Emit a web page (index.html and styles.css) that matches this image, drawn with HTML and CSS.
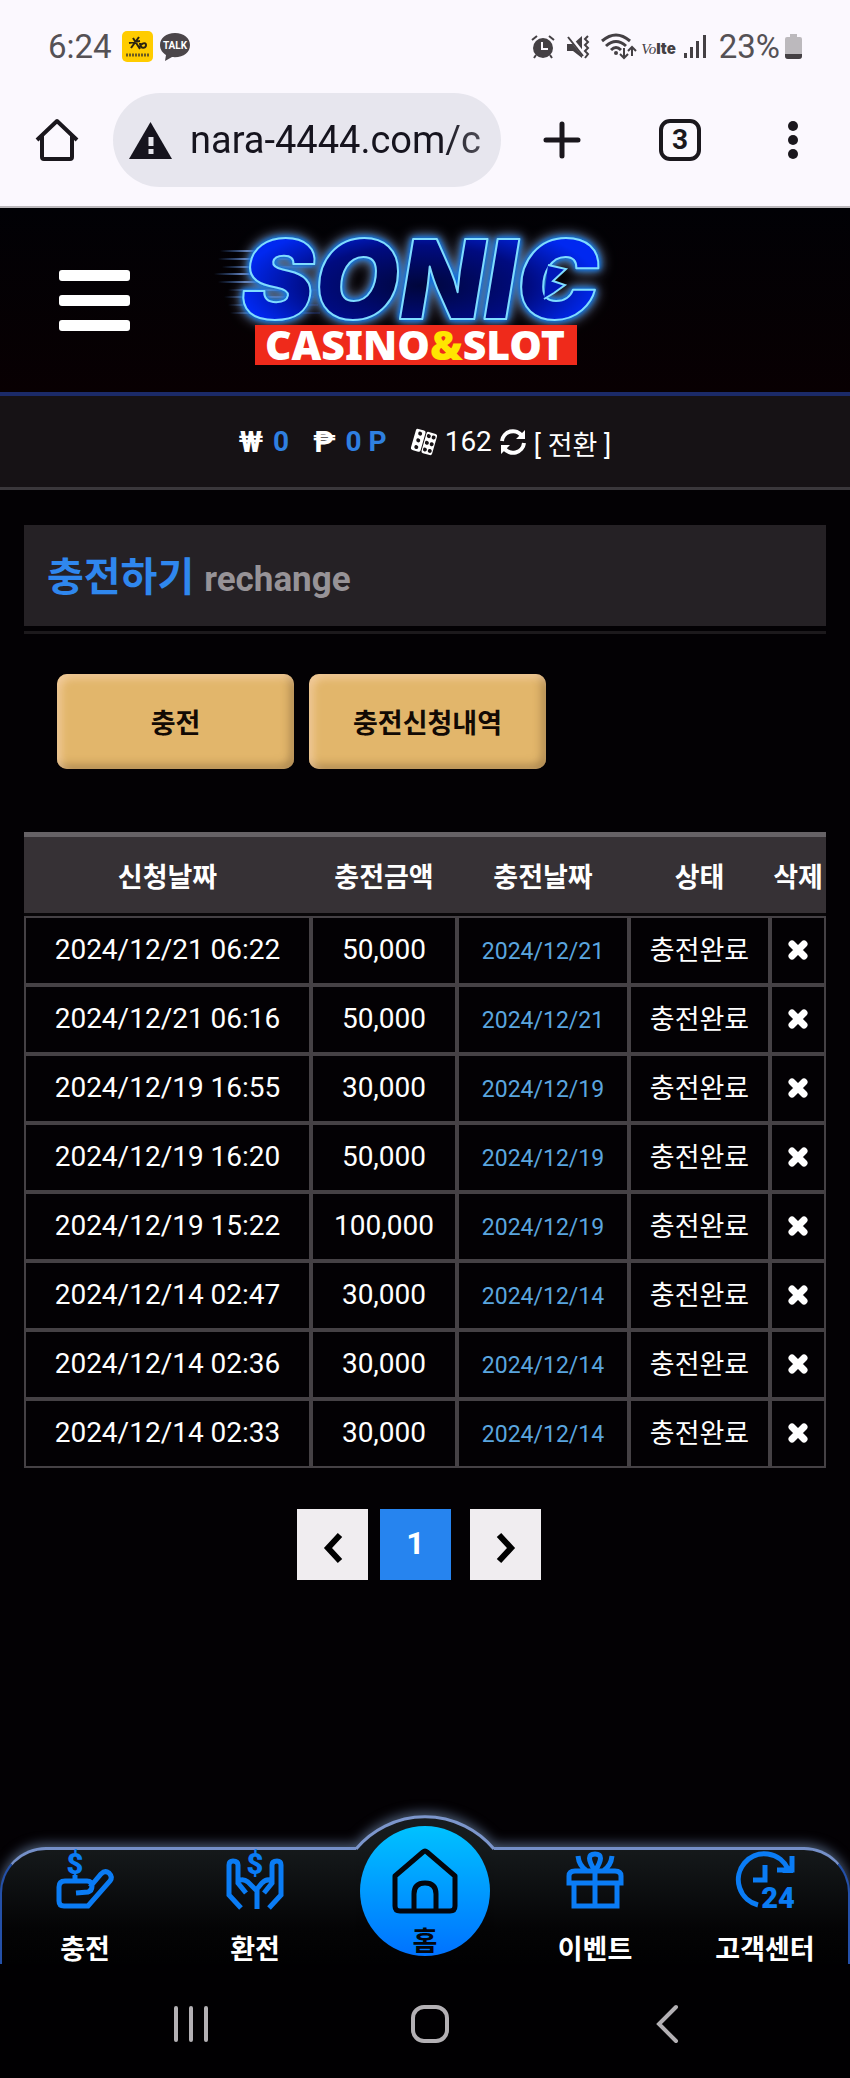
FILE: index.html
```html
<!DOCTYPE html>
<html lang="ko">
<head>
    <title>충전하기</title>
    <meta charset="utf-8">
    <meta name="viewport" content="width=device-width, initial-scale=1.0">
    <link rel="stylesheet" href="styles.css">
</head>

<body>
    <!-- shared icons -->
    <svg class="sprite" aria-hidden="true">
        <symbol id="icon-times" viewBox="0 0 20 20">
            <path d="M4 4L16 16M16 4L4 16" fill="none" stroke="currentColor" stroke-width="7" stroke-linecap="round"/>
        </symbol>
    </svg>

    <!-- phone status bar -->
    <div class="status-bar">
        <span class="status-time">6:24</span>
        <svg class="app-kb" width="31" height="31" viewBox="0 0 31 31">
            <rect width="31" height="31" rx="5" fill="#fc0"/>
            <path d="M7 12L18 10M9 17L17 6M11 7L18 18M18 12C18 18 24 18 24 14C24 11 19 12 18 16" fill="none" stroke="#2b2410" stroke-width="2"/>
            <path d="M4 24H27" stroke="#6b5a20" stroke-width="3" stroke-dasharray="2 1"/>
        </svg>
        <svg class="app-talk" width="30" height="28" viewBox="0 0 30 28">
            <path d="M15 0C6 0 0 5 0 12C0 17 3 20 6 22L5 28L12 24C23 25 30 20 30 12C30 5 24 0 15 0Z" fill="#4b464a"/>
            <text x="15" y="16" text-anchor="middle" class="talk-text">TALK</text>
        </svg>
        <div class="status-right">
            <svg width="24" height="24" viewBox="0 0 24 24" fill="none" stroke="#444044" stroke-width="3">
                <circle cx="12" cy="13" r="10" fill="#444044" stroke="none"/>
                <path d="M1 5L6 1M23 5L18 1M5 20L3 23M19 20L21 23" stroke-width="2"/>
                <path d="M11 7V14H17" stroke="#fbf8fe" stroke-width="2"/>
            </svg>
            <svg class="ic-mute" width="24" height="24" viewBox="0 0 24 24">
                <path d="M1 9H7L16 1V23L7 16H1Z" fill="#444044"/>
                <path d="M2 0L18 20" stroke="#fbf8fe" stroke-width="4"/>
                <path d="M2 2L17 21" stroke="#444044" stroke-width="2"/>
                <path d="M22 1L19 4L22 7L19 10L22 13L19 16L22 19L19 23" fill="none" stroke="#444044" stroke-width="2"/>
            </svg>
            <svg class="ic-wifi" width="35" height="27" viewBox="0 0 35 27" fill="none" stroke="#444044">
                <path d="M1 8Q15 -4 29 8M5 13Q15 4 25 13M10 17Q15 12 20 17" stroke-width="3"/>
                <circle cx="15" cy="20" r="2" fill="#444044" stroke="none"/>
                <path d="M23 15V25M19 21L23 25L27 21M31 23V14M27 18L31 14L35 18" stroke-width="2"/>
            </svg>
            <span class="volte"><i>Vo</i><b>lte</b></span>
            <svg class="ic-signal" width="22" height="23" viewBox="0 0 22 23" fill="#444044">
                <rect y="18" width="3" height="5"/><rect x="6" y="12" width="3" height="11"/>
                <rect x="12" y="6" width="3" height="17"/><rect x="19" width="3" height="23"/>
            </svg>
            <span class="battery-text">23%</span>
            <svg width="17" height="25" viewBox="0 0 17 25">
                <path d="M5 0H12V3H15Q17 3 17 5V22Q17 25 14 25H3Q0 25 0 22V5Q0 3 2 3H5Z" fill="#bcb9bd"/>
                <path d="M0 20H17V22Q17 25 14 25H3Q0 25 0 22Z" fill="#444044"/>
            </svg>
        </div>
    </div>

    <!-- browser toolbar -->
    <div class="browser-bar">
        <button class="tool" aria-label="홈페이지">
            <svg width="44" height="44" viewBox="0 0 44 44" fill="none" stroke="#1a171d" stroke-width="4">
                <path d="M2 22L22 3L42 22M7 18V39Q7 41 9 41H35Q37 41 37 39V18" stroke-linejoin="round"/>
            </svg>
        </button>
        <label class="url-box">
            <svg width="43" height="37" viewBox="0 0 43 37">
                <path d="M21.500 0L43 37H0Z" fill="#16141e"/>
                <path d="M22 15V24M22 27V32" stroke="#e7e6ee" stroke-width="5"/>
            </svg>
            <input type="text" class="url-input" value="nara-4444.com/c" aria-label="주소">
        </label>
        <button class="tool tool-plus" aria-label="새 탭">
            <svg width="38" height="38" viewBox="0 0 38 38" stroke="#1a171d" stroke-width="5" stroke-linecap="round"><path d="M19 3V35M3 19H35"/></svg>
        </button>
        <button class="tool tool-tabs">3</button>
        <button class="tool tool-more" aria-label="메뉴">
            <svg width="10" height="38" viewBox="0 0 10 38" fill="#1a171d"><circle cx="5" cy="5" r="5"/><circle cx="5" cy="19" r="5"/><circle cx="5" cy="33" r="5"/></svg>
        </button>
    </div>

    <header class="header">
        <button class="menu-button" aria-label="전체 메뉴"><span></span><span></span><span></span></button>
        <a href="#" class="logo">
            <svg width="410" height="150" viewBox="0 0 410 150">
                <defs>
                    <radialGradient id="logoFill" cx="50%" cy="55%" r="50%">
                        <stop offset="0" stop-color="#00063c"/>
                        <stop offset="0.6" stop-color="#000b80"/>
                        <stop offset="1" stop-color="#0028f0"/>
                    </radialGradient>
                    <linearGradient id="speed">
                        <stop offset="0" stop-color="#3a68b0" stop-opacity="0"/>
                        <stop offset="0.300" stop-color="#5a78b0"/>
                        <stop offset="1" stop-color="#1840c0" stop-opacity="0.200"/>
                    </linearGradient>
                </defs>
                <g fill="url(#speed)">
                    <rect x="12" y="25" width="90" height="2"/><rect x="10" y="33" width="90" height="2"/>
                    <rect x="14" y="41" width="90" height="2"/><rect x="6" y="48" width="90" height="2"/>
                    <rect x="10" y="56" width="90" height="2"/><rect x="20" y="64" width="90" height="2"/>
                    <rect x="16" y="71" width="90" height="2"/><rect x="20" y="79" width="90" height="2"/>
                    <rect x="22" y="87" width="90" height="2"/>
                </g>
                <text x="33" y="94" class="logo-sonic" fill="url(#logoFill)" stroke="#7fdcff" stroke-width="2">SONIC</text>
                <!-- quills -->
                <path d="M340 40L358 44L345 56L357 60L346 68L336 74" fill="#0018b8" stroke="#7fdcff" stroke-width="2"/>
                <rect x="47" y="100" width="322" height="40" fill="#ef2a1b"/>
                <text x="207" y="135" text-anchor="middle" class="logo-sub">CASINO<tspan fill="#ffe600">&amp;</tspan>SLOT</text>
            </svg>
        </a>
    </header>

    <div class="info-bar">
        <b class="coin">₩</b><b class="amount">0</b>
        <b class="coin coin-point">₱</b><b class="amount">0 P</b>
        <svg class="ic-dice" width="26" height="26" viewBox="0 0 26 26">
            <g transform="rotate(16 13 13)">
                <rect x="2" y="2" width="10" height="22" rx="2" fill="#fff"/><rect x="13" y="2" width="11" height="22" rx="2" fill="#fff"/>
                <g fill="#161215"><circle cx="7" cy="6" r="2"/><circle cx="7" cy="13" r="2"/><circle cx="7" cy="20" r="2"/>
                <circle cx="16" cy="6" r="2"/><circle cx="21" cy="6" r="2"/><circle cx="16" cy="13" r="2"/><circle cx="21" cy="13" r="2"/><circle cx="16" cy="20" r="2"/><circle cx="21" cy="20" r="2"/></g>
            </g>
        </svg>
        <span class="count">162</span>
        <svg class="ic-sync" width="26" height="26" viewBox="0 0 26 26" fill="none" stroke="#fff" stroke-width="4">
            <path d="M2 12A11 11 0 0 1 22 7M24 14A11 11 0 0 1 4 19"/>
            <path d="M25 1V10H16ZM1 25V16H10Z" fill="#fff" stroke="none"/>
        </svg>
        <a href="#" class="convert">[ 전환 ]</a>
    </div>

    <main class="content">
        <div class="title-wrap">
            <h1 class="title">충전하기 <small>rechange</small></h1>
        </div>

        <div class="buttons">
            <button class="gold-button">충전</button>
            <button class="gold-button">충전신청내역</button>
        </div>

        <table class="history">
            <colgroup><col class="c-apply"><col class="c-amount"><col class="c-date"><col class="c-state"><col class="c-del"></colgroup>
            <thead>
                <tr><th>신청날짜</th><th>충전금액</th><th>충전날짜</th><th>상태</th><th>삭제</th></tr>
            </thead>
            <tbody>
                <tr><td>2024/12/21 06:22</td><td>50,000</td><td class="date">2024/12/21</td><td class="state">충전완료</td><td><button class="delete" aria-label="삭제"><svg><use href="#icon-times"/></svg></button></td></tr>
                <tr><td>2024/12/21 06:16</td><td>50,000</td><td class="date">2024/12/21</td><td class="state">충전완료</td><td><button class="delete" aria-label="삭제"><svg><use href="#icon-times"/></svg></button></td></tr>
                <tr><td>2024/12/19 16:55</td><td>30,000</td><td class="date">2024/12/19</td><td class="state">충전완료</td><td><button class="delete" aria-label="삭제"><svg><use href="#icon-times"/></svg></button></td></tr>
                <tr><td>2024/12/19 16:20</td><td>50,000</td><td class="date">2024/12/19</td><td class="state">충전완료</td><td><button class="delete" aria-label="삭제"><svg><use href="#icon-times"/></svg></button></td></tr>
                <tr><td>2024/12/19 15:22</td><td>100,000</td><td class="date">2024/12/19</td><td class="state">충전완료</td><td><button class="delete" aria-label="삭제"><svg><use href="#icon-times"/></svg></button></td></tr>
                <tr><td>2024/12/14 02:47</td><td>30,000</td><td class="date">2024/12/14</td><td class="state">충전완료</td><td><button class="delete" aria-label="삭제"><svg><use href="#icon-times"/></svg></button></td></tr>
                <tr><td>2024/12/14 02:36</td><td>30,000</td><td class="date">2024/12/14</td><td class="state">충전완료</td><td><button class="delete" aria-label="삭제"><svg><use href="#icon-times"/></svg></button></td></tr>
                <tr><td>2024/12/14 02:33</td><td>30,000</td><td class="date">2024/12/14</td><td class="state">충전완료</td><td><button class="delete" aria-label="삭제"><svg><use href="#icon-times"/></svg></button></td></tr>
            </tbody>
        </table>

        <nav class="pagination" aria-label="페이지">
            <a href="#" class="page" aria-label="이전"><svg width="20" height="32" viewBox="0 0 20 32"><path d="M17 3L5 16L17 29" fill="none" stroke="#000" stroke-width="6"/></svg></a>
            <a href="#" class="page active">1</a>
            <a href="#" class="page" aria-label="다음"><svg width="20" height="32" viewBox="0 0 20 32"><path d="M3 3L15 16L3 29" fill="none" stroke="#000" stroke-width="6"/></svg></a>
        </nav>
    </main>

    <!-- bottom menu -->
    <nav class="bottom-nav">
        <div class="nav-shape">
            <div class="nav-left"></div>
            <svg class="nav-bump" width="138" height="148" viewBox="0 0 138 148">
                <defs><linearGradient id="bump" x2="0" y2="1">
                    <stop offset="0" stop-color="#171c1f"/><stop offset="0.220" stop-color="#15191b"/><stop offset="0.750" stop-color="#040405"/><stop offset="1" stop-color="#010102"/>
                </linearGradient></defs>
                <path d="M0 33A90 90 0 0 1 138 33V148H0Z" fill="url(#bump)"/>
                <path d="M0 33A90 90 0 0 1 138 33" fill="none" stroke="#7c96cc" stroke-width="3"/>
            </svg>
            <div class="nav-right"></div>
        </div>
        <a href="#" class="nav-item">
            <svg width="58" height="58" viewBox="0 0 58 58" fill="none" stroke="#0a7cf5" stroke-width="5">
                <text x="19" y="23" text-anchor="middle" class="icon-text">$</text>
                <path d="M19 24V30M20 42L32 41Q36 40 36 35Q36 30 31 30H9Q3 30 3 36V50Q3 55 8 55H32L54 30Q57 26 53 22Q49 19 45 23L34 36"/>
            </svg>
            <span>충전</span>
        </a>
        <a href="#" class="nav-item">
            <svg width="58" height="58" viewBox="0 0 58 58" fill="none" stroke="#0a7cf5" stroke-width="5">
                <text x="29" y="23" text-anchor="middle" class="icon-text">$</text>
                <path d="M15 57L3 44V14Q3 10 7 10Q12 10 12 14V32L20 42M12 30Q17 27 22 31L31 40V58M43 57L55 44V14Q55 10 51 10Q46 10 46 14V32L38 42M46 30Q41 27 36 32L31 38"/>
            </svg>
            <span>환전</span>
        </a>
        <a href="#" class="nav-item">
            <div class="home-circle">
                <svg width="66" height="66" viewBox="0 0 66 66" fill="none" stroke="#03060c" stroke-width="5" stroke-linejoin="round">
                    <path d="M3 28L31 4Q33 2 35 4L63 28V58Q63 63 58 63H8Q3 63 3 58ZM22 63V46Q22 35 33 35Q44 35 44 46V63"/>
                </svg>
                <span>홈</span>
            </div>
        </a>
        <a href="#" class="nav-item">
            <svg width="58" height="58" viewBox="0 0 58 58" fill="none" stroke="#0a7cf5" stroke-width="5">
                <path d="M8 34V55H51V34M3 32H55V25Q55 20 49 20H9Q3 20 3 25ZM29 18V55M12 5Q13 15 21 20M46 5Q45 15 37 20"/>
                <path d="M29 20Q18 3 29 3Q40 3 29 20"/>
            </svg>
            <span>이벤트</span>
        </a>
        <a href="#" class="nav-item">
            <svg width="58" height="58" viewBox="0 0 58 58" fill="none" stroke="#0a7cf5" stroke-width="5">
                <path d="M22 54A26 26 0 1 1 52 18M56 5V19H41M29 14V29H17"/>
                <path d="M57 12V22H46Z" fill="#0a7cf5" stroke="none"/>
                <text x="42" y="57" text-anchor="middle" class="icon-text">24</text>
            </svg>
            <span>고객센터</span>
        </a>
    </nav>

    <!-- android buttons -->
    <div class="system-bar">
        <button aria-label="최근 앱"><svg width="36" height="38" viewBox="0 0 36 38"><path d="M3 3V35M18 3V35M33 3V35"/></svg></button>
        <button aria-label="홈"><svg width="38" height="38" viewBox="0 0 38 38"><rect x="2" y="2" width="34" height="34" rx="11"/></svg></button>
        <button aria-label="뒤로"><svg width="28" height="38" viewBox="0 0 28 38"><path d="M26 2L9 19L26 36"/></svg></button>
    </div>
</body>
</html>
```
FILE: styles.css
```css
* {
    box-sizing: border-box;
}
body {
    margin: 0;
    min-height: 100vh;
    display: flex;
    flex-direction: column;
    background-color: #030104;
    color: #fff;
    font-family: Roboto, "Noto Sans CJK KR", sans-serif;
    font-size: 28px;
}
a {
    color: inherit;
    text-decoration: none;
}
button {
    padding: 0;
    border: none;
    background: none;
    color: inherit;
    font-family: inherit;
    cursor: pointer;
}
svg {
    display: block;
    flex: none;
    overflow: visible;
}
.sprite {
    position: absolute;
    width: 0;
    height: 0;
}

/* phone status bar */
.status-bar {
    display: flex;
    align-items: center;
    height: 93px;
    padding: 0 48px;
    background: #fbf8fe;
    color: #555155;
    font-size: 33px;
}
.status-time {
    width: 74px;
}
.app-talk {
    margin-left: 7px;
}
.talk-text {
    font: bold 10px Roboto, sans-serif;
    fill: #fff;
}
.status-right {
    display: flex;
    align-items: center;
    margin-left: auto;
}
.ic-mute,
.ic-wifi {
    margin-left: 11px;
}
.volte {
    display: flex;
    align-items: baseline;
    margin: 4px 8px 0 5px;
    color: #444044;
    font-size: 15px;
}
.volte i {
    font-family: "Liberation Serif", serif;
}
.volte b {
    font-family: Inter, sans-serif;
    font-weight: 900;
}
.battery-text {
    margin: 0 5px 0 13px;
}

/* browser toolbar */
.browser-bar {
    display: flex;
    align-items: flex-start;
    height: 115px;
    padding: 0 52px 0 35px;
    background: #fbf8fe;
    border-bottom: 2px solid #bbb8bc;
}
.tool {
    height: 94px;
    color: #1a171d;
}
.url-box {
    flex: 1;
    display: flex;
    align-items: center;
    min-width: 0;
    height: 94px;
    margin-left: 34px;
    padding: 0 16px;
    border-radius: 47px;
    background: #e7e6ee;
}
.url-input {
    flex: 1;
    min-width: 0;
    margin-left: 18px;
    padding: 0;
    border: none;
    outline: none;
    background: none;
    color: #16141e;
    font: 38px Roboto, sans-serif;
    -webkit-mask-image: linear-gradient(to right, #000 85%, rgba(0, 0, 0, 0.7));
    mask-image: linear-gradient(to right, #000 85%, rgba(0, 0, 0, 0.7));
}
.tool-plus {
    margin-left: 42px;
}
.tool-tabs {
    width: 42px;
    height: 42px;
    margin: 26px 0 0 78px;
    border: 4px solid #1a171d;
    border-radius: 11px;
    font-size: 28px;
    font-weight: bold;
    line-height: 34px;
}
.tool-more {
    margin-left: 87px;
}

/* header */
.header {
    display: flex;
    align-items: center;
    height: 188px;
    border-bottom: 4px solid #1b2a68;
    background: linear-gradient(#010105, #080002);
}
.menu-button {
    display: flex;
    flex-direction: column;
    gap: 14px;
    width: 71px;
    margin-left: 59px;
}
.menu-button span {
    height: 11px;
    border-radius: 3px;
    background: #fff;
}
.logo {
    margin-left: 78px;
}
.logo-sonic {
    font: italic 900 110px Inter, sans-serif;
    stroke-linejoin: round;
    filter: drop-shadow(0 0 2px #0a6fe0) drop-shadow(0 0 3px #0a6fe0) drop-shadow(0 0 6px rgba(157, 180, 216, 0.8));
}
.logo-sub {
    font: 900 41px "Noto Sans", sans-serif;
    fill: #fff;
}

.info-bar {
    display: flex;
    justify-content: center;
    align-items: center;
    height: 94px;
    border-bottom: 3px solid #3a373b;
    background: #161215;
}
.coin {
    font-size: 30px;
}
.amount {
    margin-left: 10px;
    color: #2f80e0;
}
.coin-point,
.ic-dice {
    margin-left: 24px;
}
.count {
    margin: 0 8px;
}
.convert {
    margin-left: 8px;
    padding-top: 4px;
    font-size: 27px;
}

/* content */
.content {
    flex: 1;
    padding: 35px 24px;
}
.title-wrap {
    padding-bottom: 5px;
    border-bottom: 3px solid #1c191c;
}
.title {
    height: 101px;
    margin: 0;
    padding-left: 23px;
    background: #252125;
    color: #2f87ee;
    font-size: 40px;
    line-height: 106px;
}
.title small {
    color: #979397;
    font-size: 35px;
}
.buttons {
    display: flex;
    gap: 15px;
    margin: 40px 0 63px 33px;
}
.gold-button {
    width: 237px;
    height: 95px;
    border-radius: 10px;
    background: #e2b66b;
    box-shadow: inset 4px 4px 8px rgba(255, 220, 190, 0.6), inset -4px -4px 8px rgba(120, 90, 50, 0.5);
    color: #120a04;
    font-size: 27px;
    font-weight: bold;
}
.history {
    width: 100%;
    table-layout: fixed;
    border-collapse: separate;
    border-spacing: 0;
    text-align: center;
}
.c-apply { width: 287px; }
.c-amount { width: 146px; }
.c-date { width: 172px; }
.c-state { width: 141px; }
.c-del { width: 56px; }
.history th {
    height: 84px;
    padding: 0;
    border-top: 5px solid #666266;
    border-bottom: 3px solid #080608;
    background: #363135;
    font-size: 27px;
    white-space: nowrap;
}
.history td {
    height: 69px;
    padding: 0 0 2px;
    border: 2px solid #454145;
}
.history .date {
    padding: 2px 0 0;
    color: #5aa5df;
    font-size: 23px;
}
.history .state {
    padding: 0;
    font-size: 27px;
    line-height: 40px;
}
.delete {
    display: block;
    margin: 0 auto;
}
.delete svg {
    width: 20px;
    height: 20px;
}
.pagination {
    display: flex;
    justify-content: center;
    margin-top: 41px;
    padding-right: 12px;
}
.page {
    display: flex;
    justify-content: center;
    align-items: center;
    width: 71px;
    height: 71px;
    padding-top: 6px;
    background: #f0edf0;
}
.page.active {
    margin: 0 19px 0 12px;
    padding: 0 0 4px;
    background: #2684ef;
    font-size: 32px;
    font-weight: bold;
}

/* bottom menu */
.bottom-nav {
    position: relative;
    display: grid;
    grid-template-columns: repeat(5, 1fr);
    height: 117px;
}
.nav-shape {
    position: absolute;
    inset: 0;
    display: grid;
    grid-template-columns: 1fr 138px 1fr;
    grid-template-rows: 100%;
    align-items: end;
    filter: drop-shadow(0 -3px 6px rgba(120, 150, 190, 0.6));
}
.nav-left,
.nav-right {
    height: 117px;
    border-top: 3px solid #7590c8;
    background: linear-gradient(#15191b, #040405 70%, #010102);
}
.nav-left {
    border-left: 2px solid #2450a8;
    border-top-left-radius: 46px;
}
.nav-right {
    border-right: 2px solid #2450a8;
    border-top-right-radius: 46px;
}
.nav-item {
    position: relative;
    display: flex;
    flex-direction: column;
    align-items: center;
    gap: 25px;
    padding-top: 4px;
    font-size: 27px;
    font-weight: bold;
    line-height: 32px;
}
.icon-text {
    font: 900 29px Roboto, sans-serif;
    fill: #0a7cf5;
    stroke: none;
}
.home-circle {
    display: flex;
    flex-direction: column;
    align-items: center;
    gap: 12px;
    width: 130px;
    height: 130px;
    margin-top: -25px;
    padding-top: 22px;
    border-radius: 50%;
    background: linear-gradient(#00c2ff, #0072ff);
    color: #03060c;
}

/* android buttons */
.system-bar {
    position: relative;
    display: flex;
    justify-content: space-between;
    align-items: center;
    height: 114px;
    padding: 6px 172px 0 173px;
    background: #010002;
}
.system-bar svg {
    fill: none;
    stroke: #b3b0b4;
    stroke-width: 4px;
    stroke-linecap: round;
}
```
